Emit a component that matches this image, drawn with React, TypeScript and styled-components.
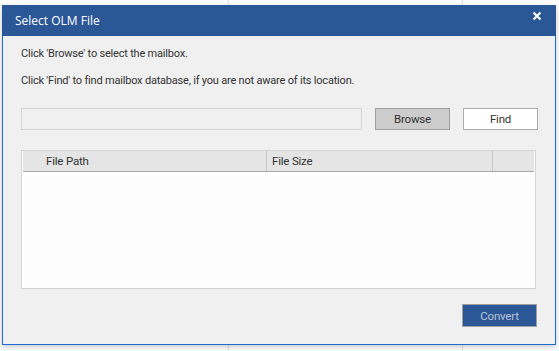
import React from "react";
import styled, { createGlobalStyle } from "styled-components";

const GlobalStyle = createGlobalStyle`
  html, body {
    margin: 0;
    padding: 0;
    background: #ffffff;
  }
  body {
    font-family: Roboto, "Liberation Sans", sans-serif;
    font-size: 11px;
    letter-spacing: -0.2px;
    color: #333333;
  }
`;

// the app behind the dialog, only its column lines show
const Desktop = styled.div`
  width: 559px;
  height: 351px;
  box-sizing: border-box;
  padding: 5px 3px 0 2px;
  overflow: hidden;
  background:
    linear-gradient(#e4e4e4, #e4e4e4) 228px 0 / 1px 100% no-repeat,
    linear-gradient(#e4e4e4, #e4e4e4) 462px 0 / 1px 100% no-repeat,
    #ffffff;
`;

const Window = styled.div`
  width: 554px;
  height: 340px;
  box-sizing: border-box;
  border: 1px solid #1a6ad8;
  border-top: 0;
  background: #f0f0f0;
  box-shadow: 0 2px 6px rgba(0, 0, 0, 0.22);
  display: flex;
  flex-direction: column;
`;

const TitleBar = styled.div`
  height: 31px;
  margin: 0 -1px;
  padding: 0 12px 0 13px;
  background: #2b5797;
  color: #ffffff;
  display: flex;
  align-items: center;
  justify-content: space-between;
  font-family: "Open Sans", "Noto Sans", sans-serif;
  font-size: 12px;
  letter-spacing: 0;
`;

const CloseButton = styled.button`
  border: 0;
  background: transparent;
  padding: 0;
  width: 14px;
  height: 14px;
  display: flex;
  align-items: center;
  justify-content: center;
  cursor: pointer;
  margin-top: -9px;
`;

const Body = styled.div`
  flex: 1;
  padding: 10px 17px 0 18px;
  display: flex;
  flex-direction: column;
`;

const Hint = styled.div<{ $gap?: number }>`
  line-height: 15px;
  margin-top: ${(p) => p.$gap ?? 0}px;
  white-space: nowrap;
`;

const PathRow = styled.div`
  display: flex;
  align-items: center;
  gap: 13px;
  margin-top: 20px;
  height: 22px;
`;

const PathInput = styled.div`
  width: 341px;
  height: 22px;
  box-sizing: border-box;
  border: 1px solid #d6d6d6;
  background: #f0f0f0;
`;

const Button = styled.button<{ $variant: "gray" | "white" | "blue" }>`
  width: 75px;
  height: ${(p) => (p.$variant === "blue" ? 23 : 22)}px;
  box-sizing: border-box;
  padding: 0;
  font-family: inherit;
  font-size: 11.5px;
  letter-spacing: -0.2px;
  border: 1px solid
    ${(p) => (p.$variant === "white" ? "#acacac" : "#9f9f9f")};
  background: ${(p) =>
    p.$variant === "gray"
      ? "#cccccc"
      : p.$variant === "white"
      ? "#ffffff"
      : "#2b5797"};
  color: ${(p) => (p.$variant === "blue" ? "#b9c4d6" : "#333333")};
`;

const Table = styled.div`
  margin-top: 20px;
  width: 515px;
  height: 139px;
  box-sizing: border-box;
  border: 1px solid #d4d4d4;
  background: #fdfdfd;
  display: flex;
  flex-direction: column;
`;

const HeaderRow = styled.div`
  height: 21px;
  box-sizing: border-box;
  display: flex;
  background: #e5e5e5;
  border-bottom: 1px solid #a9a9a9;
  margin: 0 1px;
`;

const HeaderCell = styled.div<{ $width?: number; $indent: number }>`
  ${(p) => (p.$width ? `width: ${p.$width}px;` : "flex: 1;")}
  box-sizing: border-box;
  padding-left: ${(p) => p.$indent}px;
  display: flex;
  align-items: center;
  font-size: 11.5px;
  border-right: 1px solid #c8c8c8;
  &:last-child {
    border-right: 0;
  }
`;

const Footer = styled.div`
  display: flex;
  justify-content: flex-end;
  margin-top: 15px;
  padding-right: 1px;
`;

export default function App() {
  return (
    <>
      <GlobalStyle />
      <Desktop>
        <Window>
          <TitleBar>
            <span>Select OLM File</span>
            <CloseButton aria-label="Close">
              <svg width="10" height="10" viewBox="0 0 10 10">
                <path
                  d="M1.5 1.5 L8.5 8.5 M8.5 1.5 L1.5 8.5"
                  stroke="#ffffff"
                  strokeWidth="2"
                />
              </svg>
            </CloseButton>
          </TitleBar>
          <Body>
            <Hint>Click 'Browse' to select the mailbox.</Hint>
            <Hint $gap={12}>
              Click 'Find' to find mailbox database, if you are not aware of
              its location.
            </Hint>
            <PathRow>
              <PathInput />
              <Button $variant="gray">Browse</Button>
              <Button $variant="white">Find</Button>
            </PathRow>
            <Table>
              <HeaderRow>
                <HeaderCell $width={244} $indent={23}>File Path</HeaderCell>
                <HeaderCell $width={226} $indent={5}>File Size</HeaderCell>
                <HeaderCell $indent={0} />
              </HeaderRow>
            </Table>
            <Footer>
              <Button $variant="blue">Convert</Button>
            </Footer>
          </Body>
        </Window>
      </Desktop>
    </>
  );
}
